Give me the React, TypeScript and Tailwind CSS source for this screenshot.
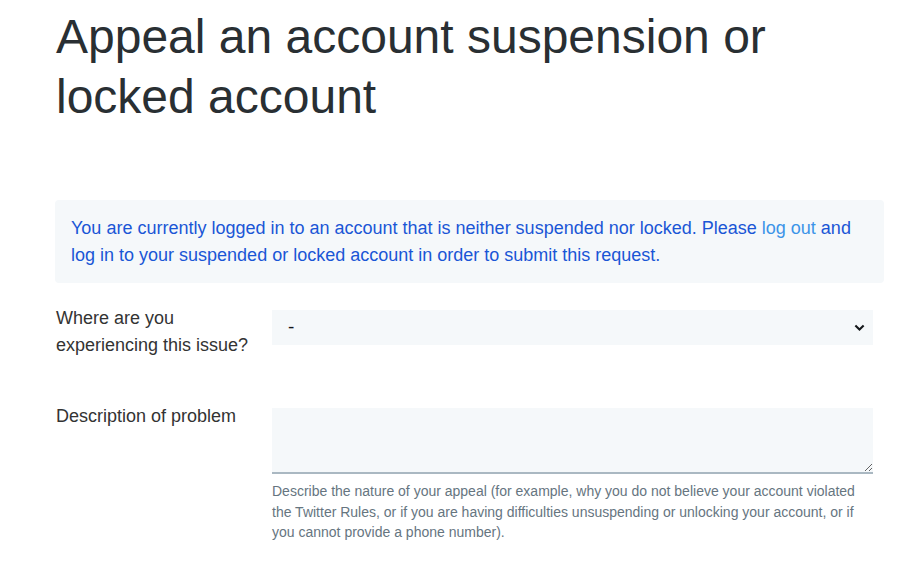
export default function App() {
  return (
    <div className="min-h-screen bg-white font-['Liberation_Sans',Arial,sans-serif] text-[#333]">
      <div className="pl-[56px] pr-[38px] pt-[7px]">
        {/* Heading */}
        <h1 className="text-[48px] leading-[60px] text-[#292f33] pr-[60px]">
          Appeal an account suspension or locked account
        </h1>

        {/* Logged-in notice */}
        <div className="mt-[73px] -ml-px rounded bg-[#f5f8fa] px-4 pt-[15px] pb-[14px] text-[18px] leading-[27px] text-[#1a56d6]">
          You are currently logged in to an account that is neither suspended nor locked. Please{' '}
          <a href="#" className="text-[#3b94e8]">log out</a> and log in to your suspended or locked
          account in order to submit this request.
        </div>

        {/* Form */}
        <form className="mt-[22px] pr-[11px]">
          <div className="flex gap-4">
            <label className="w-[200px] shrink-0 text-[18px] leading-[27px] text-[#333]">
              Where are you experiencing this issue?
            </label>
            <div className="relative mt-[5px] flex-1">
              <select className="h-[35px] w-full appearance-none bg-[#f5f8fa] pl-[16px] text-[19px] text-[#14171a] outline-none">
                <option>-</option>
              </select>
              <svg
                className="pointer-events-none absolute right-[8px] top-[12px] h-[11px] w-[11px]"
                viewBox="0 0 16 16"
                fill="none"
                stroke="#14171a"
                strokeWidth="3"
              >
                <path d="M2 5l6 6 6-6" />
              </svg>
            </div>
          </div>

          <div className="mt-[44px] flex gap-4">
            <label className="w-[200px] shrink-0 text-[18px] leading-[27px] text-[#333]">
              Description of problem
            </label>
            <div className="mt-[5px] flex-1">
              <textarea className="block h-[66px] w-full resize-y border-b-2 border-[#aab8c2] bg-[#f5f8fa] outline-none" />
              <p className="mt-[7px] text-[14px] leading-[20.5px] text-[#66757f]">
                Describe the nature of your appeal (for example, why you do not believe your account
                violated the Twitter Rules, or if you are having difficulties unsuspending or unlocking
                your account, or if you cannot provide a phone number).
              </p>
            </div>
          </div>
        </form>
      </div>
    </div>
  )
}
